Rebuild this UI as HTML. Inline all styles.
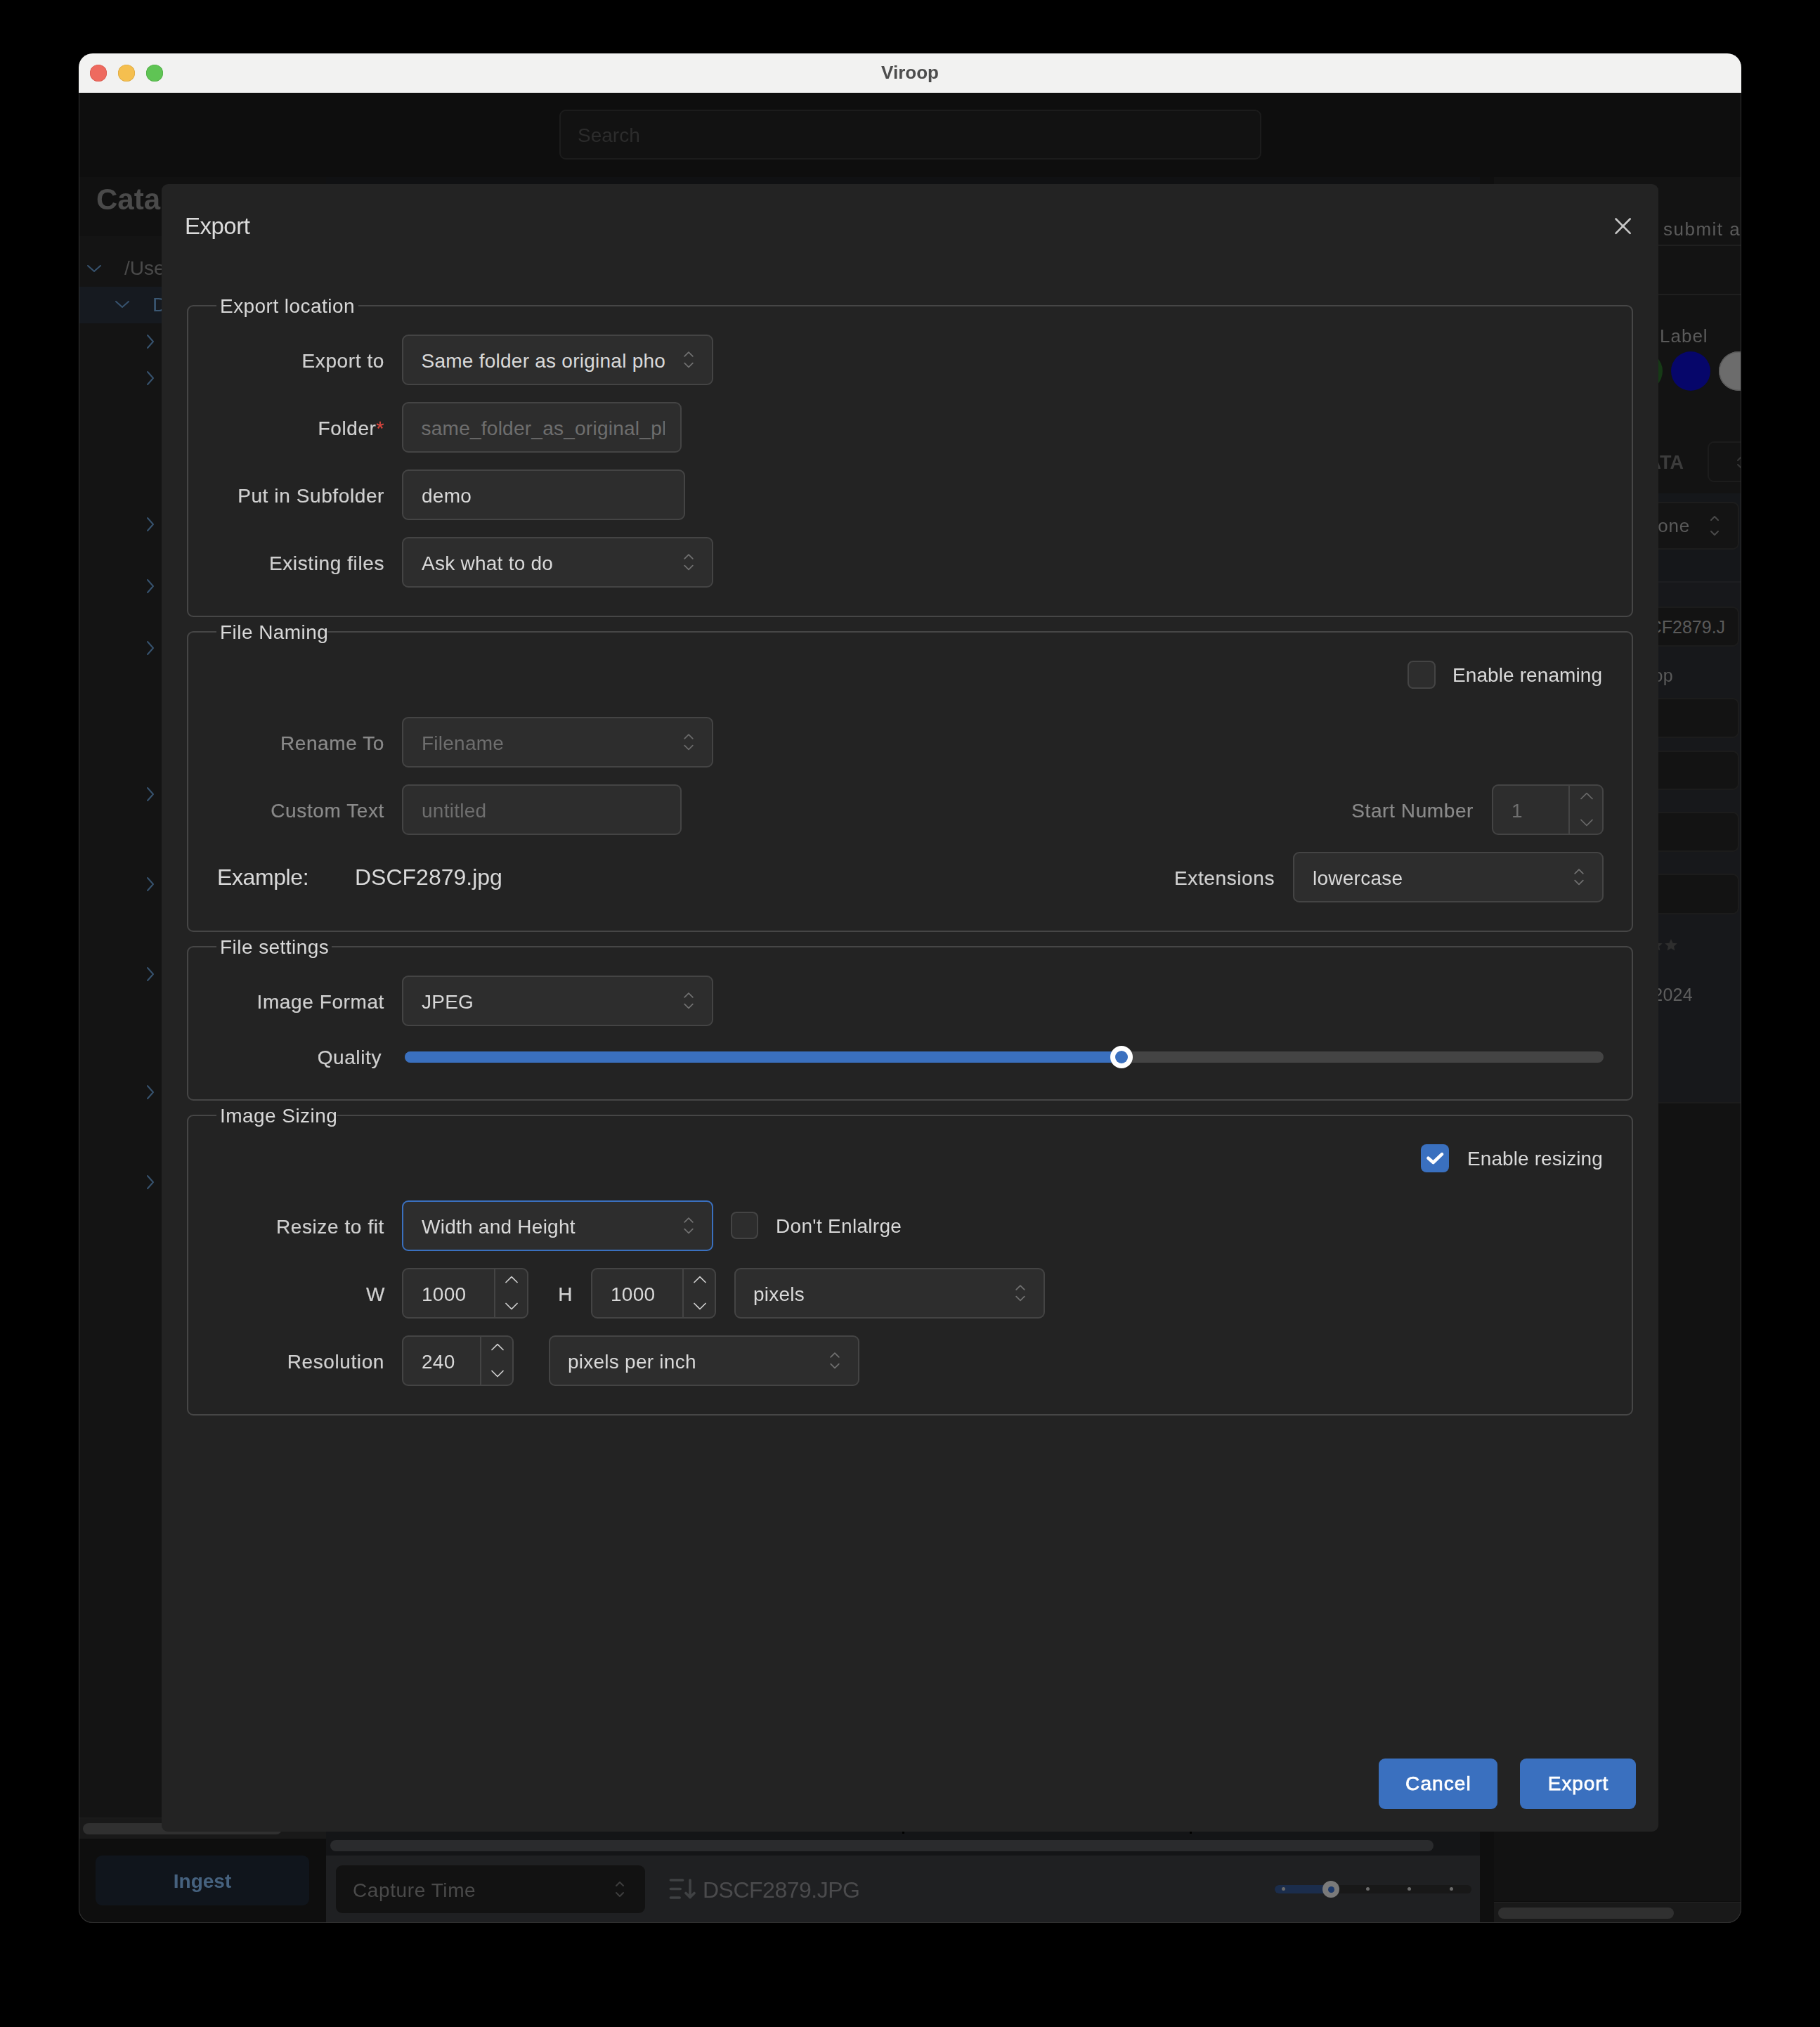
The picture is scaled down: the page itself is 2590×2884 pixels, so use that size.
<!DOCTYPE html>
<html><head><meta charset="utf-8"><style>
html,body{margin:0;padding:0;background:#000;width:2590px;height:2884px;overflow:hidden}
body div, body svg{position:absolute;box-sizing:border-box}
.t{will-change:transform}
body{font-family:"Liberation Sans", sans-serif;position:relative}
</style></head><body>
<div style="left:112px;top:76px;width:2366px;height:2660px;border-radius:20px;background:#0e0e0e;overflow:hidden;box-shadow:0 0 0 1px #2e2e2e inset"><div style="left:-112px;top:-76px;width:2590px;height:2884px"><div style="left:112px;top:76px;width:2366px;height:56px;background:#f2f2f1"></div><div style="left:128px;top:92px;width:24px;height:24px;border-radius:50%;background:#ee6a5f;box-shadow:0 0 0 0.6px #d35549 inset"></div><div style="left:168px;top:92px;width:24px;height:24px;border-radius:50%;background:#f5bf4f;box-shadow:0 0 0 0.6px #d6a33c inset"></div><div style="left:208px;top:92px;width:24px;height:24px;border-radius:50%;background:#5fc454;box-shadow:0 0 0 0.6px #4aa63f inset"></div><div class="t" style="left:694.5px;width:1200px;text-align:center;top:89.99px;font-size:26px;line-height:26px;color:#4d4d4d;font-weight:700;white-space:nowrap;">Viroop</div><div style="left:112px;top:132px;width:2366px;height:120px;background:#0e0e0e"></div><div style="left:796px;top:156px;width:999px;height:71px;background:#121212;border:2px solid #1c1c1c;border-radius:9px;box-sizing:border-box"></div><div class="t" style="left:822px;top:179.30px;font-size:28px;line-height:28px;color:#2c2c2c;font-weight:400;white-space:nowrap;">Search</div><div style="left:112px;top:252px;width:352px;height:84px;background:#111111"></div><div class="t" style="left:137px;top:263.05px;font-size:42px;line-height:42px;color:#4a4a4a;font-weight:700;white-space:nowrap;">Catalog</div><div style="left:112px;top:336px;width:352px;height:2250px;background:#141414"></div><svg style="left:121.5px;top:373.5px;width:24px;height:16px" width="24" height="16" viewBox="0 0 24 16"><polyline points="3,4 12,12 21,4" fill="none" stroke="#37536f" stroke-width="2" stroke-linecap="round" stroke-linejoin="round"/></svg><div class="t" style="left:176.5px;top:368.30px;font-size:28px;line-height:28px;color:#4a4a4a;font-weight:400;white-space:nowrap;">/Users/demo</div><div style="left:112px;top:408px;width:352px;height:52px;background:#161a20"></div><svg style="left:162px;top:425px;width:24px;height:16px" width="24" height="16" viewBox="0 0 24 16"><polyline points="3,4 12,12 21,4" fill="none" stroke="#37536f" stroke-width="2" stroke-linecap="round" stroke-linejoin="round"/></svg><div class="t" style="left:217px;top:420.30px;font-size:28px;line-height:28px;color:#3b5874;font-weight:400;white-space:nowrap;">DCIM</div><svg style="left:206px;top:473.7px;width:16px;height:24px" width="16" height="24" viewBox="0 0 16 24"><polyline points="4,3 12,12 4,21" fill="none" stroke="#37536f" stroke-width="2" stroke-linecap="round" stroke-linejoin="round"/></svg><svg style="left:206px;top:525.7px;width:16px;height:24px" width="16" height="24" viewBox="0 0 16 24"><polyline points="4,3 12,12 4,21" fill="none" stroke="#37536f" stroke-width="2" stroke-linecap="round" stroke-linejoin="round"/></svg><svg style="left:206px;top:734px;width:16px;height:24px" width="16" height="24" viewBox="0 0 16 24"><polyline points="4,3 12,12 4,21" fill="none" stroke="#37536f" stroke-width="2" stroke-linecap="round" stroke-linejoin="round"/></svg><svg style="left:206px;top:822px;width:16px;height:24px" width="16" height="24" viewBox="0 0 16 24"><polyline points="4,3 12,12 4,21" fill="none" stroke="#37536f" stroke-width="2" stroke-linecap="round" stroke-linejoin="round"/></svg><svg style="left:206px;top:910px;width:16px;height:24px" width="16" height="24" viewBox="0 0 16 24"><polyline points="4,3 12,12 4,21" fill="none" stroke="#37536f" stroke-width="2" stroke-linecap="round" stroke-linejoin="round"/></svg><svg style="left:206px;top:1118px;width:16px;height:24px" width="16" height="24" viewBox="0 0 16 24"><polyline points="4,3 12,12 4,21" fill="none" stroke="#37536f" stroke-width="2" stroke-linecap="round" stroke-linejoin="round"/></svg><svg style="left:206px;top:1246px;width:16px;height:24px" width="16" height="24" viewBox="0 0 16 24"><polyline points="4,3 12,12 4,21" fill="none" stroke="#37536f" stroke-width="2" stroke-linecap="round" stroke-linejoin="round"/></svg><svg style="left:206px;top:1374px;width:16px;height:24px" width="16" height="24" viewBox="0 0 16 24"><polyline points="4,3 12,12 4,21" fill="none" stroke="#37536f" stroke-width="2" stroke-linecap="round" stroke-linejoin="round"/></svg><svg style="left:206px;top:1542px;width:16px;height:24px" width="16" height="24" viewBox="0 0 16 24"><polyline points="4,3 12,12 4,21" fill="none" stroke="#37536f" stroke-width="2" stroke-linecap="round" stroke-linejoin="round"/></svg><svg style="left:206px;top:1670px;width:16px;height:24px" width="16" height="24" viewBox="0 0 16 24"><polyline points="4,3 12,12 4,21" fill="none" stroke="#37536f" stroke-width="2" stroke-linecap="round" stroke-linejoin="round"/></svg><div style="left:112px;top:2586px;width:352px;height:30px;background:#191919"></div><div style="left:112px;top:2586px;width:352px;height:1px;background:#1e1e1e"></div><div style="left:118px;top:2594px;width:283px;height:16px;background:#303030;border-radius:8px"></div><div style="left:112px;top:2616px;width:352px;height:120px;background:#0e0e0e"></div><div style="left:136px;top:2640px;width:304px;height:71px;background:#10151c;border-radius:9px"></div><div class="t" style="left:-312px;width:1200px;text-align:center;top:2662.50px;font-size:28px;line-height:28px;color:#46627f;font-weight:700;white-space:nowrap;">Ingest</div><div style="left:464px;top:252px;width:1642px;height:2388px;background:#101113"></div><div style="left:464px;top:2605px;width:1642px;height:35px;background:#141517"></div><div style="left:470px;top:2618px;width:1570px;height:16px;background:#2a2b2d;border-radius:8px"></div><div style="left:464px;top:2640px;width:1642px;height:96px;background:#1f2022"></div><div style="left:478px;top:2654px;width:440px;height:68px;background:#121212;border-radius:9px"></div><div class="t" style="left:502px;top:2675.80px;font-size:28px;line-height:28px;color:#4a4a4a;font-weight:400;letter-spacing:0.6px;white-space:nowrap;">Capture Time</div><svg style="left:874px;top:2672px;width:16px;height:32px" width="16" height="32" viewBox="0 0 16 32"><polyline points="3,11 8,6 13,11" fill="none" stroke="#3e3e3e" stroke-width="2" stroke-linecap="round" stroke-linejoin="round"/><polyline points="3,21 8,26 13,21" fill="none" stroke="#3e3e3e" stroke-width="2" stroke-linecap="round" stroke-linejoin="round"/></svg><svg style="left:950px;top:2670px;width:44px;height:36px" width="44" height="36" viewBox="0 0 44 36"><g stroke="#404244" stroke-width="3.6" stroke-linecap="round" fill="none"><line x1="4.4" y1="5" x2="21.6" y2="5"/><line x1="4.4" y1="17.5" x2="18.2" y2="17.5"/><line x1="4.4" y1="30" x2="17.2" y2="30"/><line x1="32" y1="5" x2="32" y2="29.5"/><polyline points="26,23.5 32,29.5 38,23.5" stroke-linejoin="round"/></g></svg><div class="t" style="left:1000.4px;top:2672.91px;font-size:32px;line-height:32px;color:#4b4b4d;font-weight:400;letter-spacing:-0.5px;white-space:nowrap;">DSCF2879.JPG</div><div style="left:1814px;top:2682px;width:280px;height:12px;background:#181818;border-radius:6px"></div><div style="left:1814px;top:2682px;width:80px;height:12px;background:#1b2d4c;border-radius:6px 0 0 6px"></div><div style="left:1823.5px;top:2685.2px;width:5px;height:5px;border-radius:50%;background:#6a6a6a"></div><div style="left:1943.5px;top:2685.2px;width:5px;height:5px;border-radius:50%;background:#6a6a6a"></div><div style="left:2002.5px;top:2685.2px;width:5px;height:5px;border-radius:50%;background:#6a6a6a"></div><div style="left:2062.5px;top:2685.2px;width:5px;height:5px;border-radius:50%;background:#6a6a6a"></div><div style="left:1882px;top:2676px;width:24px;height:24px;border-radius:50%;background:#7a7a7a"></div><div style="left:1889.5px;top:2683.5px;width:9px;height:9px;border-radius:50%;background:#1d3a6b"></div><div style="left:2106px;top:252px;width:20px;height:2484px;background:#0f0f0f"></div><div style="left:2126px;top:252px;width:352px;height:1317px;background:#131313"></div><div style="left:2126px;top:1569px;width:352px;height:1136px;background:#121212"></div><div class="t" style="left:2367px;top:312.99px;font-size:26px;line-height:26px;color:#5a5a5a;font-weight:400;letter-spacing:1.5px;white-space:nowrap;">submit all</div><div style="left:2126px;top:348px;width:352px;height:2px;background:#1f1f1f"></div><div style="left:2126px;top:418px;width:352px;height:2px;background:#1f1f1f"></div><div class="t" style="left:2361.5px;top:464.99px;font-size:26px;line-height:26px;color:#5a5a5a;font-weight:400;letter-spacing:1px;white-space:nowrap;">Label</div><div style="left:2310px;top:500px;width:56px;height:56px;border-radius:50%;background:#163a16"></div><div style="left:2378px;top:500px;width:56px;height:56px;border-radius:50%;background:#06066a"></div><div style="left:2446px;top:500px;width:56px;height:56px;border-radius:50%;background:#6c6c6c;box-shadow:0 0 0 1.5px #5a5a5a inset"></div><div class="t" style="left:1196px;width:1200px;text-align:right;top:645.14px;font-size:27px;line-height:27px;color:#3c3c3c;font-weight:700;white-space:nowrap;">METADATA</div><div style="left:2430px;top:628px;width:90px;height:58px;border:2px solid #1c1c1c;border-radius:9px;box-sizing:border-box"></div><svg style="left:2466px;top:640px;width:30px;height:34px" width="30" height="34" viewBox="0 0 30 34"><g fill="none" stroke="#363636" stroke-width="2" stroke-linecap="round" stroke-linejoin="round"><polyline points="7,15 14,8 21,15"/><polyline points="7,21 14,28 21,21"/></g></svg><div style="left:2126px;top:702px;width:352px;height:126px;background:#15171a"></div><div style="left:2200px;top:714px;width:275px;height:68px;background:#141414;border:2px solid #1d1d1d;border-radius:9px;box-sizing:border-box"></div><div class="t" style="left:1205px;width:1200px;text-align:right;top:734.99px;font-size:26px;line-height:26px;color:#5a5a5a;font-weight:400;letter-spacing:0.8px;white-space:nowrap;">None</div><svg style="left:2432px;top:722px;width:16px;height:52px" width="16" height="52" viewBox="0 0 16 52"><polyline points="3,18 8,13 13,18" fill="none" stroke="#4a4a4a" stroke-width="2" stroke-linecap="round" stroke-linejoin="round"/><polyline points="3,34 8,39 13,34" fill="none" stroke="#4a4a4a" stroke-width="2" stroke-linecap="round" stroke-linejoin="round"/></svg><div style="left:2126px;top:828px;width:352px;height:740px;background:#17181b"></div><div style="left:2126px;top:1568px;width:352px;height:2px;background:#1c1c1c"></div><div style="left:2126px;top:827px;width:352px;height:2px;background:#1d1e21"></div><div style="left:1284px;top:2606px;width:3px;height:3px;background:#000"></div><div style="left:1693px;top:2606px;width:3px;height:3px;background:#000"></div><div style="left:2250px;top:863px;width:225px;height:57px;background:#131313;border:2px solid #1c1c1c;border-radius:9px;box-sizing:border-box"></div><div style="left:2250px;top:993px;width:225px;height:57px;background:#131313;border:2px solid #1c1c1c;border-radius:9px;box-sizing:border-box"></div><div style="left:2250px;top:1068px;width:225px;height:56px;background:#131313;border:2px solid #1c1c1c;border-radius:9px;box-sizing:border-box"></div><div style="left:2250px;top:1155px;width:225px;height:57px;background:#131313;border:2px solid #1c1c1c;border-radius:9px;box-sizing:border-box"></div><div style="left:2250px;top:1243px;width:225px;height:58px;background:#131313;border:2px solid #1c1c1c;border-radius:9px;box-sizing:border-box"></div><div style="left:2200px;top:863px;width:254px;height:57px;overflow:hidden"><div style="left:112px;top:16.84px;font-size:25px;line-height:25px;color:#5a5a5a;white-space:nowrap">DSCF2879.JPG</div></div><div class="t" style="left:1181px;width:1200px;text-align:right;top:948.84px;font-size:25px;line-height:25px;color:#5a5a5a;font-weight:400;letter-spacing:0.3px;white-space:nowrap;">Viroop</div><svg style="left:2300px;top:1331.5px;width:90px;height:26px" width="90" height="26" viewBox="0 0 90 26"><polygon transform="translate(15,13)" points="0,-9 2.6,-3.2 8.8,-2.8 4.1,1.4 5.5,7.6 0,4.3 -5.5,7.6 -4.1,1.4 -8.8,-2.8 -2.6,-3.2" fill="#2e2e2e"/><polygon transform="translate(36,13)" points="0,-9 2.6,-3.2 8.8,-2.8 4.1,1.4 5.5,7.6 0,4.3 -5.5,7.6 -4.1,1.4 -8.8,-2.8 -2.6,-3.2" fill="#2e2e2e"/><polygon transform="translate(57,13)" points="0,-9 2.6,-3.2 8.8,-2.8 4.1,1.4 5.5,7.6 0,4.3 -5.5,7.6 -4.1,1.4 -8.8,-2.8 -2.6,-3.2" fill="#2e2e2e"/><polygon transform="translate(78,13)" points="0,-9 2.6,-3.2 8.8,-2.8 4.1,1.4 5.5,7.6 0,4.3 -5.5,7.6 -4.1,1.4 -8.8,-2.8 -2.6,-3.2" fill="#2e2e2e"/></svg><div class="t" style="left:1209px;width:1200px;text-align:right;top:1403.14px;font-size:25px;line-height:25px;color:#5e5e5e;font-weight:400;letter-spacing:0.3px;white-space:nowrap;">01/01/2024</div><div style="left:2126px;top:2706px;width:352px;height:1px;background:#222222"></div><div style="left:2126px;top:2707px;width:352px;height:29px;background:#191919"></div><div style="left:2132px;top:2714px;width:250px;height:16px;background:#303030;border-radius:8px"></div></div></div><div style="left:230px;top:262px;width:2130px;height:2344px;background:#232323;border-radius:9px"></div><div class="t" style="left:262.5px;top:305.07px;font-size:33px;line-height:33px;color:#dcdcdc;font-weight:400;letter-spacing:-0.5px;white-space:nowrap;">Export</div><svg style="left:2296px;top:308px;width:28px;height:28px" width="28" height="28" viewBox="0 0 28 28"><g stroke="#c8c8c8" stroke-width="2.6" stroke-linecap="round"><line x1="3.5" y1="3.5" x2="23.7" y2="23.8"/><line x1="23.7" y1="3.5" x2="3.5" y2="23.8"/></g></svg><div style="left:266px;top:434px;width:2058px;height:444px;border:2px solid #464646;border-radius:9px;box-sizing:border-box"></div><div style="left:308px;top:432px;width:202px;height:6px;background:#232323"></div><div class="t" style="left:313.2px;top:421.80px;font-size:28px;line-height:28px;color:#d9d9d9;font-weight:400;letter-spacing:0.45px;white-space:nowrap;">Export location</div><div class="t" style="left:-653px;width:1200px;text-align:right;top:499.70px;font-size:28px;line-height:28px;color:#d0d0d0;font-weight:400;letter-spacing:0.6px;white-space:nowrap;-webkit-text-stroke:0.2px #d0d0d0">Export to</div><div style="left:572px;top:476px;width:443px;height:72px;background:#2d2d2d;border:2px solid #444444;border-radius:9px;box-sizing:border-box"></div><div style="left:599.5px;top:476px;width:346.5px;height:72px;overflow:hidden"><div style="left:0;top:0;width:2000px;height:72px"><div style="left:0;top:23.70px;font-size:28px;line-height:28px;color:#d9d9d9;white-space:nowrap;letter-spacing:0.25px">Same folder as original photo</div></div></div><svg style="left:970.4px;top:498.0px;width:20px;height:28px" width="20" height="28" viewBox="0 0 20 28"><g fill="none" stroke="#707070" stroke-width="1.8" stroke-linecap="round" stroke-linejoin="round"><polyline points="4.2,8.8 10,3.2 15.8,8.8"/><polyline points="4.2,18.7 10,24.3 15.8,18.7"/></g></svg><div class="t" style="left:-653px;width:1200px;text-align:right;top:595.70px;font-size:28px;line-height:28px;color:#d0d0d0;font-weight:400;letter-spacing:0.6px;white-space:nowrap;-webkit-text-stroke:0.2px #d0d0d0">Folder<span style="color:#d9463e;-webkit-text-stroke:0.35px #d9463e">*</span></div><div style="left:572px;top:572px;width:398px;height:72px;background:#2d2d2d;border:2px solid #444444;border-radius:9px;box-sizing:border-box"></div><div style="left:599.5px;top:572px;width:346.5px;height:72px;overflow:hidden"><div style="left:0;top:23.70px;font-size:28px;line-height:28px;color:#6e6e6e;white-space:nowrap;letter-spacing:0.25px">same_folder_as_original_photo</div></div><div class="t" style="left:-653px;width:1200px;text-align:right;top:691.70px;font-size:28px;line-height:28px;color:#d0d0d0;font-weight:400;letter-spacing:0.6px;white-space:nowrap;-webkit-text-stroke:0.2px #d0d0d0">Put in Subfolder</div><div style="left:572px;top:668px;width:403px;height:72px;background:#2d2d2d;border:2px solid #444444;border-radius:9px;box-sizing:border-box"></div><div class="t" style="left:599.5px;top:691.70px;font-size:28px;line-height:28px;color:#d9d9d9;font-weight:400;letter-spacing:0.25px;white-space:nowrap;">demo</div><div class="t" style="left:-653px;width:1200px;text-align:right;top:787.70px;font-size:28px;line-height:28px;color:#d0d0d0;font-weight:400;letter-spacing:0.6px;white-space:nowrap;-webkit-text-stroke:0.2px #d0d0d0">Existing files</div><div style="left:572px;top:764px;width:443px;height:72px;background:#2d2d2d;border:2px solid #444444;border-radius:9px;box-sizing:border-box"></div><div class="t" style="left:599.5px;top:787.70px;font-size:28px;line-height:28px;color:#d9d9d9;font-weight:400;letter-spacing:0.25px;white-space:nowrap;">Ask what to do</div><svg style="left:970.4px;top:786.0px;width:20px;height:28px" width="20" height="28" viewBox="0 0 20 28"><g fill="none" stroke="#707070" stroke-width="1.8" stroke-linecap="round" stroke-linejoin="round"><polyline points="4.2,8.8 10,3.2 15.8,8.8"/><polyline points="4.2,18.7 10,24.3 15.8,18.7"/></g></svg><div style="left:266px;top:898px;width:2058px;height:428px;border:2px solid #464646;border-radius:9px;box-sizing:border-box"></div><div style="left:308px;top:896px;width:158px;height:6px;background:#232323"></div><div class="t" style="left:313.2px;top:885.80px;font-size:28px;line-height:28px;color:#d9d9d9;font-weight:400;letter-spacing:0.45px;white-space:nowrap;">File Naming</div><div style="left:2003px;top:940px;width:40px;height:40px;background:#2d2d2d;border:2px solid #444444;border-radius:8px;box-sizing:border-box"></div><div class="t" style="left:2067.2px;top:946.60px;font-size:28px;line-height:28px;color:#d9d9d9;font-weight:400;letter-spacing:0.1px;white-space:nowrap;">Enable renaming</div><div class="t" style="left:-653px;width:1200px;text-align:right;top:1043.70px;font-size:28px;line-height:28px;color:#8a8a8a;font-weight:400;letter-spacing:0.6px;white-space:nowrap;-webkit-text-stroke:0.2px #8a8a8a">Rename To</div><div style="left:572px;top:1020px;width:443px;height:72px;background:#2d2d2d;border:2px solid #444444;border-radius:9px;box-sizing:border-box"></div><div class="t" style="left:599.5px;top:1043.70px;font-size:28px;line-height:28px;color:#6e6e6e;font-weight:400;letter-spacing:0.25px;white-space:nowrap;">Filename</div><svg style="left:970.4px;top:1042.0px;width:20px;height:28px" width="20" height="28" viewBox="0 0 20 28"><g fill="none" stroke="#6a6a6a" stroke-width="1.8" stroke-linecap="round" stroke-linejoin="round"><polyline points="4.2,8.8 10,3.2 15.8,8.8"/><polyline points="4.2,18.7 10,24.3 15.8,18.7"/></g></svg><div class="t" style="left:-653px;width:1200px;text-align:right;top:1139.70px;font-size:28px;line-height:28px;color:#8a8a8a;font-weight:400;letter-spacing:0.6px;white-space:nowrap;-webkit-text-stroke:0.2px #8a8a8a">Custom Text</div><div style="left:572px;top:1116px;width:398px;height:72px;background:#2d2d2d;border:2px solid #444444;border-radius:9px;box-sizing:border-box"></div><div class="t" style="left:599.5px;top:1139.70px;font-size:28px;line-height:28px;color:#6e6e6e;font-weight:400;letter-spacing:0.25px;white-space:nowrap;">untitled</div><div class="t" style="left:896.5px;width:1200px;text-align:right;top:1139.70px;font-size:28px;line-height:28px;color:#8a8a8a;font-weight:400;letter-spacing:0.6px;white-space:nowrap;-webkit-text-stroke:0.2px #8a8a8a">Start Number</div><div style="left:2123px;top:1116px;width:159px;height:72px;background:#2d2d2d;border:2px solid #444444;border-radius:9px;box-sizing:border-box"></div><div style="left:2232px;top:1117px;width:2px;height:70px;background:#444444"></div><div class="t" style="left:2150.5px;top:1139.70px;font-size:28px;line-height:28px;color:#6e6e6e;font-weight:400;letter-spacing:0.25px;white-space:nowrap;">1</div><svg style="left:2247.5px;top:1117px;width:20px;height:60px" width="20" height="60" viewBox="0 0 20 60"><g fill="none" stroke="#6a6a6a" stroke-width="1.7" stroke-linecap="round" stroke-linejoin="round"><polyline points="2,19.5 10,11.7 18,19.5"/><polyline points="2,49.5 10,57.5 18,49.5"/></g></svg><div class="t" style="left:309px;top:1232.41px;font-size:32px;line-height:32px;color:#d9d9d9;font-weight:400;letter-spacing:-0.4px;white-space:nowrap;">Example:</div><div class="t" style="left:505px;top:1232.41px;font-size:32px;line-height:32px;color:#d9d9d9;font-weight:400;white-space:nowrap;">DSCF2879.jpg</div><div class="t" style="left:614px;width:1200px;text-align:right;top:1236.30px;font-size:28px;line-height:28px;color:#d0d0d0;font-weight:400;letter-spacing:0.6px;white-space:nowrap;-webkit-text-stroke:0.2px #d0d0d0">Extensions</div><div style="left:1840px;top:1212px;width:442px;height:72px;background:#2d2d2d;border:2px solid #444444;border-radius:9px;box-sizing:border-box"></div><div class="t" style="left:1867.5px;top:1235.70px;font-size:28px;line-height:28px;color:#d9d9d9;font-weight:400;letter-spacing:0.25px;white-space:nowrap;">lowercase</div><svg style="left:2237.4px;top:1234.0px;width:20px;height:28px" width="20" height="28" viewBox="0 0 20 28"><g fill="none" stroke="#707070" stroke-width="1.8" stroke-linecap="round" stroke-linejoin="round"><polyline points="4.2,8.8 10,3.2 15.8,8.8"/><polyline points="4.2,18.7 10,24.3 15.8,18.7"/></g></svg><div style="left:266px;top:1346px;width:2058px;height:220px;border:2px solid #464646;border-radius:9px;box-sizing:border-box"></div><div style="left:308px;top:1344px;width:164px;height:6px;background:#232323"></div><div class="t" style="left:313.2px;top:1333.80px;font-size:28px;line-height:28px;color:#d9d9d9;font-weight:400;letter-spacing:0.45px;white-space:nowrap;">File settings</div><div class="t" style="left:-653px;width:1200px;text-align:right;top:1411.70px;font-size:28px;line-height:28px;color:#d0d0d0;font-weight:400;letter-spacing:0.6px;white-space:nowrap;-webkit-text-stroke:0.2px #d0d0d0">Image Format</div><div style="left:572px;top:1388px;width:443px;height:72px;background:#2d2d2d;border:2px solid #444444;border-radius:9px;box-sizing:border-box"></div><div class="t" style="left:599.5px;top:1411.70px;font-size:28px;line-height:28px;color:#d9d9d9;font-weight:400;letter-spacing:0.25px;white-space:nowrap;">JPEG</div><svg style="left:970.4px;top:1410.0px;width:20px;height:28px" width="20" height="28" viewBox="0 0 20 28"><g fill="none" stroke="#707070" stroke-width="1.8" stroke-linecap="round" stroke-linejoin="round"><polyline points="4.2,8.8 10,3.2 15.8,8.8"/><polyline points="4.2,18.7 10,24.3 15.8,18.7"/></g></svg><div class="t" style="left:-657px;width:1200px;text-align:right;top:1491.10px;font-size:28px;line-height:28px;color:#d0d0d0;font-weight:400;letter-spacing:0.6px;white-space:nowrap;-webkit-text-stroke:0.2px #d0d0d0">Quality</div><div style="left:575.5px;top:1496px;width:1706.0px;height:16px;background:#444444;border-radius:8px"></div><div style="left:575.5px;top:1496px;width:1020.5px;height:16px;background:#3a70bf;border-radius:8px 0 0 8px"></div><div style="left:1580px;top:1488px;width:32px;height:32px;border-radius:50%;background:#ffffff"></div><div style="left:1586.75px;top:1494.75px;width:18.5px;height:18.5px;border-radius:50%;background:#3a70bf"></div><div style="left:266px;top:1586px;width:2058px;height:428px;border:2px solid #464646;border-radius:9px;box-sizing:border-box"></div><div style="left:308px;top:1584px;width:172px;height:6px;background:#232323"></div><div class="t" style="left:313.2px;top:1573.80px;font-size:28px;line-height:28px;color:#d9d9d9;font-weight:400;letter-spacing:0.45px;white-space:nowrap;">Image Sizing</div><div style="left:2022px;top:1628px;width:40px;height:40px;background:#3a70bf;border-radius:8px"></div><svg style="left:2022px;top:1628px;width:40px;height:40px" width="40" height="40" viewBox="0 0 40 40"><polyline points="10.5,19.8 17.6,26 30,14.2" fill="none" stroke="#ffffff" stroke-width="4.6" stroke-linecap="round" stroke-linejoin="round"/></svg><div class="t" style="left:2087.8px;top:1634.70px;font-size:28px;line-height:28px;color:#d9d9d9;font-weight:400;letter-spacing:0.1px;white-space:nowrap;">Enable resizing</div><div class="t" style="left:-653px;width:1200px;text-align:right;top:1731.70px;font-size:28px;line-height:28px;color:#d0d0d0;font-weight:400;letter-spacing:0.6px;white-space:nowrap;-webkit-text-stroke:0.2px #d0d0d0">Resize to fit</div><div style="left:572px;top:1708px;width:443px;height:72px;background:#2d2d2d;border:2px solid #3a70bf;border-radius:9px;box-sizing:border-box"></div><div class="t" style="left:599.5px;top:1731.70px;font-size:28px;line-height:28px;color:#d9d9d9;font-weight:400;letter-spacing:0.25px;white-space:nowrap;">Width and Height</div><svg style="left:970.4px;top:1730.0px;width:20px;height:28px" width="20" height="28" viewBox="0 0 20 28"><g fill="none" stroke="#707070" stroke-width="1.8" stroke-linecap="round" stroke-linejoin="round"><polyline points="4.2,8.8 10,3.2 15.8,8.8"/><polyline points="4.2,18.7 10,24.3 15.8,18.7"/></g></svg><div style="left:1039.5px;top:1724px;width:39.0px;height:39px;background:#2d2d2d;border:2px solid #444444;border-radius:8px;box-sizing:border-box"></div><div class="t" style="left:1104px;top:1730.60px;font-size:28px;line-height:28px;color:#d9d9d9;font-weight:400;letter-spacing:0.3px;white-space:nowrap;">Don't Enlalrge</div><div class="t" style="left:-652.5px;width:1200px;text-align:right;top:1827.70px;font-size:28px;line-height:28px;color:#d0d0d0;font-weight:400;letter-spacing:0.6px;white-space:nowrap;-webkit-text-stroke:0.2px #d0d0d0">W</div><div style="left:572px;top:1804px;width:180px;height:72px;background:#2d2d2d;border:2px solid #444444;border-radius:9px;box-sizing:border-box"></div><div style="left:703px;top:1805px;width:2px;height:70px;background:#444444"></div><div class="t" style="left:599.5px;top:1827.70px;font-size:28px;line-height:28px;color:#d9d9d9;font-weight:400;letter-spacing:0.25px;white-space:nowrap;">1000</div><svg style="left:718.0px;top:1805px;width:20px;height:60px" width="20" height="60" viewBox="0 0 20 60"><g fill="none" stroke="#d0d0d0" stroke-width="1.7" stroke-linecap="round" stroke-linejoin="round"><polyline points="2,19.5 10,11.7 18,19.5"/><polyline points="2,49.5 10,57.5 18,49.5"/></g></svg><div class="t" style="left:-385px;width:1200px;text-align:right;top:1827.70px;font-size:28px;line-height:28px;color:#d0d0d0;font-weight:400;letter-spacing:0.6px;white-space:nowrap;-webkit-text-stroke:0.2px #d0d0d0">H</div><div style="left:841px;top:1804px;width:178px;height:72px;background:#2d2d2d;border:2px solid #444444;border-radius:9px;box-sizing:border-box"></div><div style="left:971px;top:1805px;width:2px;height:70px;background:#444444"></div><div class="t" style="left:868.5px;top:1827.70px;font-size:28px;line-height:28px;color:#d9d9d9;font-weight:400;letter-spacing:0.25px;white-space:nowrap;">1000</div><svg style="left:985.5px;top:1805px;width:20px;height:60px" width="20" height="60" viewBox="0 0 20 60"><g fill="none" stroke="#d0d0d0" stroke-width="1.7" stroke-linecap="round" stroke-linejoin="round"><polyline points="2,19.5 10,11.7 18,19.5"/><polyline points="2,49.5 10,57.5 18,49.5"/></g></svg><div style="left:1044.5px;top:1804px;width:442.5px;height:72px;background:#2d2d2d;border:2px solid #444444;border-radius:9px;box-sizing:border-box"></div><div class="t" style="left:1072.0px;top:1827.70px;font-size:28px;line-height:28px;color:#d9d9d9;font-weight:400;letter-spacing:0.25px;white-space:nowrap;">pixels</div><svg style="left:1442.4px;top:1826.0px;width:20px;height:28px" width="20" height="28" viewBox="0 0 20 28"><g fill="none" stroke="#707070" stroke-width="1.8" stroke-linecap="round" stroke-linejoin="round"><polyline points="4.2,8.8 10,3.2 15.8,8.8"/><polyline points="4.2,18.7 10,24.3 15.8,18.7"/></g></svg><div class="t" style="left:-653px;width:1200px;text-align:right;top:1923.70px;font-size:28px;line-height:28px;color:#d0d0d0;font-weight:400;letter-spacing:0.6px;white-space:nowrap;-webkit-text-stroke:0.2px #d0d0d0">Resolution</div><div style="left:572px;top:1900px;width:159px;height:72px;background:#2d2d2d;border:2px solid #444444;border-radius:9px;box-sizing:border-box"></div><div style="left:683px;top:1901px;width:2px;height:70px;background:#444444"></div><div class="t" style="left:599.5px;top:1923.70px;font-size:28px;line-height:28px;color:#d9d9d9;font-weight:400;letter-spacing:0.25px;white-space:nowrap;">240</div><svg style="left:697.5px;top:1901px;width:20px;height:60px" width="20" height="60" viewBox="0 0 20 60"><g fill="none" stroke="#d0d0d0" stroke-width="1.7" stroke-linecap="round" stroke-linejoin="round"><polyline points="2,19.5 10,11.7 18,19.5"/><polyline points="2,49.5 10,57.5 18,49.5"/></g></svg><div style="left:780.5px;top:1900px;width:442.5px;height:72px;background:#2d2d2d;border:2px solid #444444;border-radius:9px;box-sizing:border-box"></div><div class="t" style="left:808.0px;top:1923.70px;font-size:28px;line-height:28px;color:#d9d9d9;font-weight:400;letter-spacing:0.25px;white-space:nowrap;">pixels per inch</div><svg style="left:1178.4px;top:1922.0px;width:20px;height:28px" width="20" height="28" viewBox="0 0 20 28"><g fill="none" stroke="#707070" stroke-width="1.8" stroke-linecap="round" stroke-linejoin="round"><polyline points="4.2,8.8 10,3.2 15.8,8.8"/><polyline points="4.2,18.7 10,24.3 15.8,18.7"/></g></svg><div style="left:1962px;top:2502px;width:169px;height:72px;background:#3a70bf;border-radius:9px"></div><div class="t" style="left:1447px;width:1200px;text-align:center;top:2524.30px;font-size:28px;line-height:28px;color:#ffffff;font-weight:400;letter-spacing:1.1px;white-space:nowrap;-webkit-text-stroke:0.75px #fff">Cancel</div><div style="left:2163px;top:2502px;width:165px;height:72px;background:#3a70bf;border-radius:9px"></div><div class="t" style="left:1646px;width:1200px;text-align:center;top:2524.30px;font-size:28px;line-height:28px;color:#ffffff;font-weight:400;letter-spacing:0.9px;white-space:nowrap;-webkit-text-stroke:0.75px #fff">Export</div><div style="left:112px;top:132px;width:2366px;height:2604px;border:1px solid #323232;border-top:none;border-radius:0 0 20px 20px;box-sizing:border-box;pointer-events:none"></div>
</body></html>
